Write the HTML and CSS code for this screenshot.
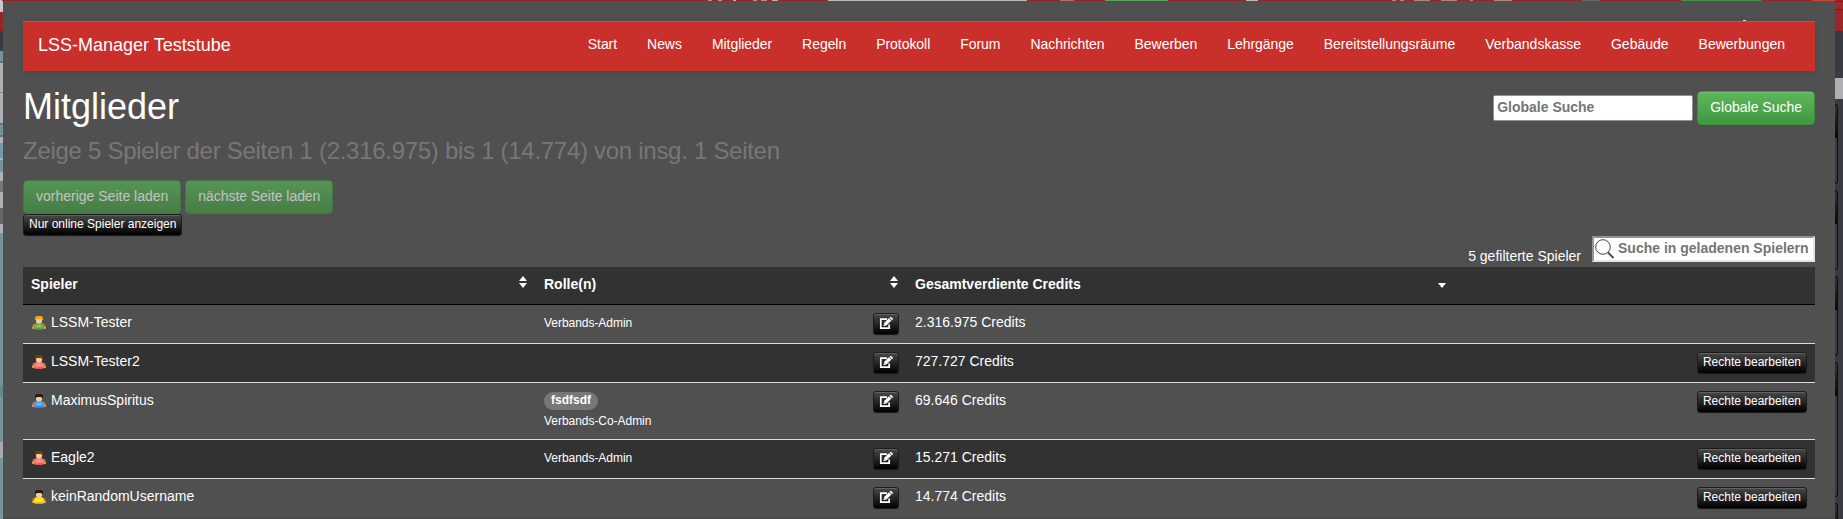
FILE: index.html
```html
<!DOCTYPE html>
<html lang="de">
<head>
<meta charset="utf-8">
<title>Mitglieder</title>
<link rel="stylesheet" href="styles.css">
</head>
<body>
<svg class="defs" width="0" height="0">
  <defs>
    <symbol id="user" viewBox="0 0 14 14">
      <path d="M0 13v-2.500q.3-2.500 3-3h8q2.700.5 3 3v2.500h-2.500l-.5-1.500h-8l-.5 1.500z" fill="#b5763a"/>
      <path d="M.5 11h2v1.700h-2zM11.500 11h2v1.700h-2z" fill="#f3a64c"/>
      <path d="M1.800 12.800q-.6-4.300 2.700-5.800h5q3.300 1.500 2.700 5.800l-1.700 1.200h-7z" fill="currentColor"/>
      <path d="M3.500 10.500q3.500-3 7 0-3.500 1.500-7 0z" fill="#fff" opacity=".28"/>
      <path d="M2 12.600h10l-1.500 1.400h-7z" fill="#000" opacity=".2"/>
      <path d="M4 3h6v3l-1.500 1.500h-3l-1.500-1.500z" fill="#f2cb9a"/>
      <path d="M3 4v-2.500l1.500-1.500h5l1.500 1.500v2.500h-1l-1-1h-4l-1 1z" fill="var(--hair)"/>
    </symbol>
    <symbol id="edit" viewBox="0 0 14 13">
      <path d="M8 2.200h-6.200v9h8.400v-3.700" fill="none" stroke="#fff" stroke-width="1.700"/>
      <path d="M4.300 9.300l.8-3.300 4.800-4.800 2.500 2.400-4.900 4.900z" fill="#fff"/>
      <path d="M10.500.7l.7-.7h1l1.600 1.600v1l-.7.600z" fill="#fff"/>
      <path d="M5.600 7.300l1 1" stroke="#222" stroke-width=".7"/>
    </symbol>
    <symbol id="sort" viewBox="0 0 8 12">
      <path d="M4 0l4 5h-8zM4 12l4-5h-8z" fill="#fff"/>
    </symbol>
  </defs>
</svg>
<div class="screen">
  <div class="topstrip"></div>
  <div class="left"></div>
  <main class="panel">
    <nav class="navbar">
      <a class="brand">LSS-Manager Teststube</a>
      <div class="links"><a>Start</a><a>News</a><a>Mitglieder</a><a>Regeln</a><a>Protokoll</a><a>Forum</a><a>Nachrichten</a><a>Bewerben</a><a>Lehrgänge</a><a>Bereitstellungsräume</a><a>Verbandskasse</a><a>Gebäude</a><a>Bewerbungen</a></div>
      <i class="speck"></i>
    </nav>
    <header class="head">
      <h1>Mitglieder</h1>
      <form class="global"><input type="text" placeholder="Globale Suche"><button type="button" class="btn">Globale Suche</button></form>
    </header>
    <h3>Zeige 5 Spieler der Seiten 1 (2.316.975) bis 1 (14.774) von insg. 1 Seiten</h3>
    <div class="pager"><button class="btn" disabled>vorherige Seite laden</button><button class="btn next" disabled>nächste Seite laden</button></div>
    <div class="online"><button class="xs">Nur online Spieler anzeigen</button></div>
    <div class="filter">
      <span>5 gefilterte Spieler</span>
      <label class="search"><svg width="20" height="20" viewBox="0 0 20 20" fill="none" stroke="#444"><circle cx="8" cy="8" r="7.300"/><path d="M13 13.500l5.500 5.500" stroke-width="1.800"/></svg><input type="text" placeholder="Suche in geladenen Spielern"></label>
    </div>
    <table>
      <colgroup><col class="c1"><col class="c2"><col class="c3"><col></colgroup>
      <thead><tr>
        <th><div class="cell">Spieler<svg class="sort"><use href="#sort"/></svg></div></th>
        <th><div class="cell">Rolle(n)<svg class="sort"><use href="#sort"/></svg></div></th>
        <th><div class="cell">Gesamtverdiente Credits<i class="down"></i></div></th>
        <th></th>
      </tr></thead>
      <tbody>
        <tr>
          <td><div class="cell name"><svg class="user green"><use href="#user"/></svg>LSSM-Tester</div></td>
          <td><div class="cell"><small>Verbands-Admin</small><button class="xs edit"><svg><use href="#edit"/></svg></button></div></td>
          <td>2.316.975 Credits</td><td></td>
        </tr>
        <tr>
          <td><div class="cell name"><svg class="user red"><use href="#user"/></svg>LSSM-Tester2</div></td>
          <td><div class="cell"><small></small><button class="xs edit"><svg><use href="#edit"/></svg></button></div></td>
          <td>727.727 Credits</td><td class="right"><button class="xs">Rechte bearbeiten</button></td>
        </tr>
        <tr class="tall">
          <td><div class="cell name"><svg class="user blue"><use href="#user"/></svg>MaximusSpiritus</div></td>
          <td><div class="cell"><div class="roles"><span class="badge">fsdfsdf</span><small>Verbands-Co-Admin</small></div><button class="xs edit"><svg><use href="#edit"/></svg></button></div></td>
          <td>69.646 Credits</td><td class="right"><button class="xs">Rechte bearbeiten</button></td>
        </tr>
        <tr>
          <td><div class="cell name"><svg class="user red"><use href="#user"/></svg>Eagle2</div></td>
          <td><div class="cell"><small>Verbands-Admin</small><button class="xs edit"><svg><use href="#edit"/></svg></button></div></td>
          <td>15.271 Credits</td><td class="right"><button class="xs">Rechte bearbeiten</button></td>
        </tr>
        <tr>
          <td><div class="cell name"><svg class="user yellow"><use href="#user"/></svg>keinRandomUsername</div></td>
          <td><div class="cell"><small></small><button class="xs edit"><svg><use href="#edit"/></svg></button></div></td>
          <td>14.774 Credits</td><td class="right"><button class="xs">Rechte bearbeiten</button></td>
        </tr>
      </tbody>
    </table>
  </main>
  <aside class="side">
    <i class="s-red"></i><i class="s-dark"></i><i class="s-light"></i>
    <div class="cards"><b></b><b></b><b></b><b class="long"></b><b></b></div>
  </aside>
</div>
</body>
</html>
```
FILE: styles.css
```css
* { box-sizing: border-box; }
body {
  margin: 0;
  overflow: hidden;
  background: #3a3b42;
  color: #fff;
  font: 14px/20px "Liberation Sans", Arial, sans-serif;
}
.defs { position: absolute; }
button, input { font-family: inherit; }
.screen {
  display: grid;
  grid-template-columns: 3px 1832px 8px;
  grid-template-rows: 1px 518px;
  height: 519px;
}
.topstrip {
  grid-column: 1 / 4;
  background: linear-gradient(90deg, #ccc 2px, #952627 2px 708px, #b98d8d 708px 712px, #952627 712px 718px, #b98d8d 718px 722px, #952627 722px 733px, #c9a9a9 733px 736px, #952627 736px 753px, #b98d8d 753px 757px, #952627 757px 761px, #b98d8d 761px 767px, #952627 767px 772px, #c9a9a9 772px 778px, #952627 778px 828px, #b8bbba 828px 1027px, #952627 1027px 1060px, #b07070 1060px 1074px, #952627 1074px 1105px, #59a55b 1105px 1168px, #952627 1168px 1246px, #b8bbba 1246px 1258px, #952627 1258px 1392px, #b98080 1392px 1396px, #952627 1396px 1400px, #b98080 1400px 1404px, #952627 1404px 1414px, #b98080 1414px 1430px, #952627 1430px 1441px, #b98080 1441px 1457px, #952627 1457px 1470px, #b98080 1470px 1473px, #952627 1473px 1494px, #b98080 1494px 1512px, #952627 1512px 1582px, #666 1582px 1600px, #952627 1600px 1681px, #459047 1681px 1761px, #952627 1761px 1812px, #d04030 1812px 1835px, #952627 1835px);
}
.left {
  background: linear-gradient(#c9c9cb 11px, #952627 11px 30px, #3a3b42 30px 50px, #78939e 50px 60px, #5c7680 60px 62px, #b0b0b6 62px 91px, #888 91px 92px, #b0b0b6 92px 122px, #5c7680 122px 124px, #78939e 124px 134px, #5c7680 134px 136px, #b0b0b6 136px 142px, #6f9cb2 142px 157px, #b0b0b6 157px 159px, #78939e 159px 171px, #b0b0b6 171px 180px, #77777b 180px 191px, #b0b0b6 191px 207px, #66666a 207px 223px, #b0b0b6 223px 232px, #78939e 232px 384px, #618c86 384px 396px, #78939e 396px 441px, #aaa 441px 457px, #78939e 457px);
}
.panel {
  padding: 20px 20px 0;
  overflow: hidden;
  background: #505050;
  border-bottom: 1px solid #484848;
  border-top-left-radius: 2px;
}
.navbar {
  position: relative;
  display: flex;
  justify-content: space-between;
  height: 50px;
  padding: 0 15px;
  background: #c9302c;
  box-shadow: inset 0 1px 0 #d64a44, 0 1px 5px rgba(0, 0, 0, .12);
}
.brand { padding-top: 14px; font-size: 18px; }
.links { display: flex; padding-top: 13px; }
.links a { padding: 0 15px; }
.links a:nth-child(-n+9) { letter-spacing: -.05px; }
.speck { position: absolute; left: 1720px; top: -1px; width: 3px; height: 1px; background: #ddd; }
.head { display: flex; justify-content: space-between; height: 63px; padding-top: 20px; }
h1 { margin: -4px 0 0; font-size: 36px; font-weight: 400; line-height: 40px; }
h3 { height: 46px; margin: 0; padding-top: 4px; font-size: 24px; font-weight: 400; line-height: 26px; letter-spacing: -.285px; color: #777; }
.global { display: flex; gap: 4px; align-items: flex-start; }
.global input {
  width: 200px;
  height: 26px;
  margin-top: 4px;
  padding: 0 3px 2px;
  border: 1px solid #8f8f9d;
  border-radius: 2px;
  font-size: 14px;
  font-weight: 700;
}
input::placeholder { color: #757575; opacity: 1; }
.btn {
  height: 34px;
  padding: 0 12px 2px;
  border: 1px solid #3e8f3e;
  border-radius: 4px;
  background: linear-gradient(#5cb85c, #419641);
  box-shadow: inset 0 1px 0 rgba(255, 255, 255, .15), 0 1px 1px rgba(0, 0, 0, .08);
  color: #fff;
  font-size: 14px;
  line-height: 20px;
  white-space: nowrap;
}
.btn:disabled { opacity: .65; box-shadow: none; }
.btn.next { letter-spacing: -.05px; }
.pager { display: flex; gap: 4px; height: 34px; }
.online { height: 22px; }
.xs {
  display: block;
  height: 22px;
  padding: 0 5px 2px;
  border: 1px solid #1c1c1c;
  border-radius: 3px;
  background: linear-gradient(#484848, #000);
  box-shadow: inset 0 1px 0 rgba(255, 255, 255, .15), 0 1px 1px rgba(0, 0, 0, .08);
  color: #fff;
  font-size: 12px;
  line-height: 18px;
  white-space: nowrap;
}
.filter { display: flex; justify-content: flex-end; gap: 11px; height: 31px; }
.filter span { padding-top: 10px; }
.search {
  display: flex;
  width: 223px;
  height: 26px;
  border: 2px solid;
  border-color: #949494 #e4e4e4 #e4e4e4 #949494;
  background: #fff;
}
.search svg { flex: none; margin: 1px 0 0 1px; }
.search input { min-width: 0; flex: 1; padding: 0 0 2px 3px; border: 0; background: none; font-size: 14px; font-weight: 700; }
table { width: 1792px; table-layout: fixed; border-collapse: separate; border-spacing: 0; }
.c1 { width: 513px; }
.c2 { width: 371px; }
.c3 { width: 548px; }
th { height: 37px; padding: 7px 8px 0; background: #323232; font-weight: 700; text-align: left; vertical-align: top; }
td { height: 39px; padding: 7px 8px 0; border-top: 1px solid #ddd; vertical-align: top; }
tbody tr:first-child td { border-top-color: #000; }
tbody tr:nth-child(even) td { background: #323232; }
.tall td { height: 57px; }
.cell { display: flex; justify-content: space-between; }
.name { justify-content: flex-start; gap: 5px; }
.sort { width: 8px; height: 12px; margin: 2px 1px 0 0; }
.down { height: 5px; margin: 9px 1px 0 0; border: 4px solid transparent; border-top: 5px solid #fff; border-bottom: 0; }
small { display: block; padding-top: 1px; font-size: 12px; letter-spacing: -.04px; }
.user { width: 14px; height: 14px; margin: 4px 0 0 1px; }
.green { color: #6cac49; --hair: #efa51e; }
.red { color: #ff7777; --hair: #743c16; }
.blue { color: #459ffc; --hair: #2f1d0c; }
.yellow { color: #ffe000; --hair: #2f1d0c; }
.edit { width: 26px; margin-top: 1px; }
.edit svg { display: block; width: 14px; height: 13px; }
.right .xs { margin: 1px 0 0 auto; }
.badge {
  display: block;
  width: 54px;
  height: 18px;
  margin: 2px 0 0;
  border-radius: 9px;
  background: #777;
  font-size: 12px;
  font-weight: 700;
  line-height: 16px;
  text-align: center;
}
.side { display: flex; flex-direction: column; background: #3a3b42; overflow: hidden; }
.s-red { height: 30px; background: linear-gradient(#7c2224 1px, #a02a2a 1px 8px, #701e20 8px 9px, #9c2628 9px); }
.s-dark { height: 47px; }
.s-light { height: 21px; flex: none; background: #aeaeb4; }
.s-red, .s-dark { flex: none; }
.cards { display: flex; flex-direction: column; gap: 6px; padding-top: 5px; }
.cards b {
  width: 3px;
  height: 80px;
  flex: none;
  border: 1px solid #0c0d10;
  border-left: 0;
  border-radius: 0 3px 3px 0;
  background: linear-gradient(#33343a, #08090c 33px, #3a3b42 33px);
}
.cards .long { height: 135px; }
```
